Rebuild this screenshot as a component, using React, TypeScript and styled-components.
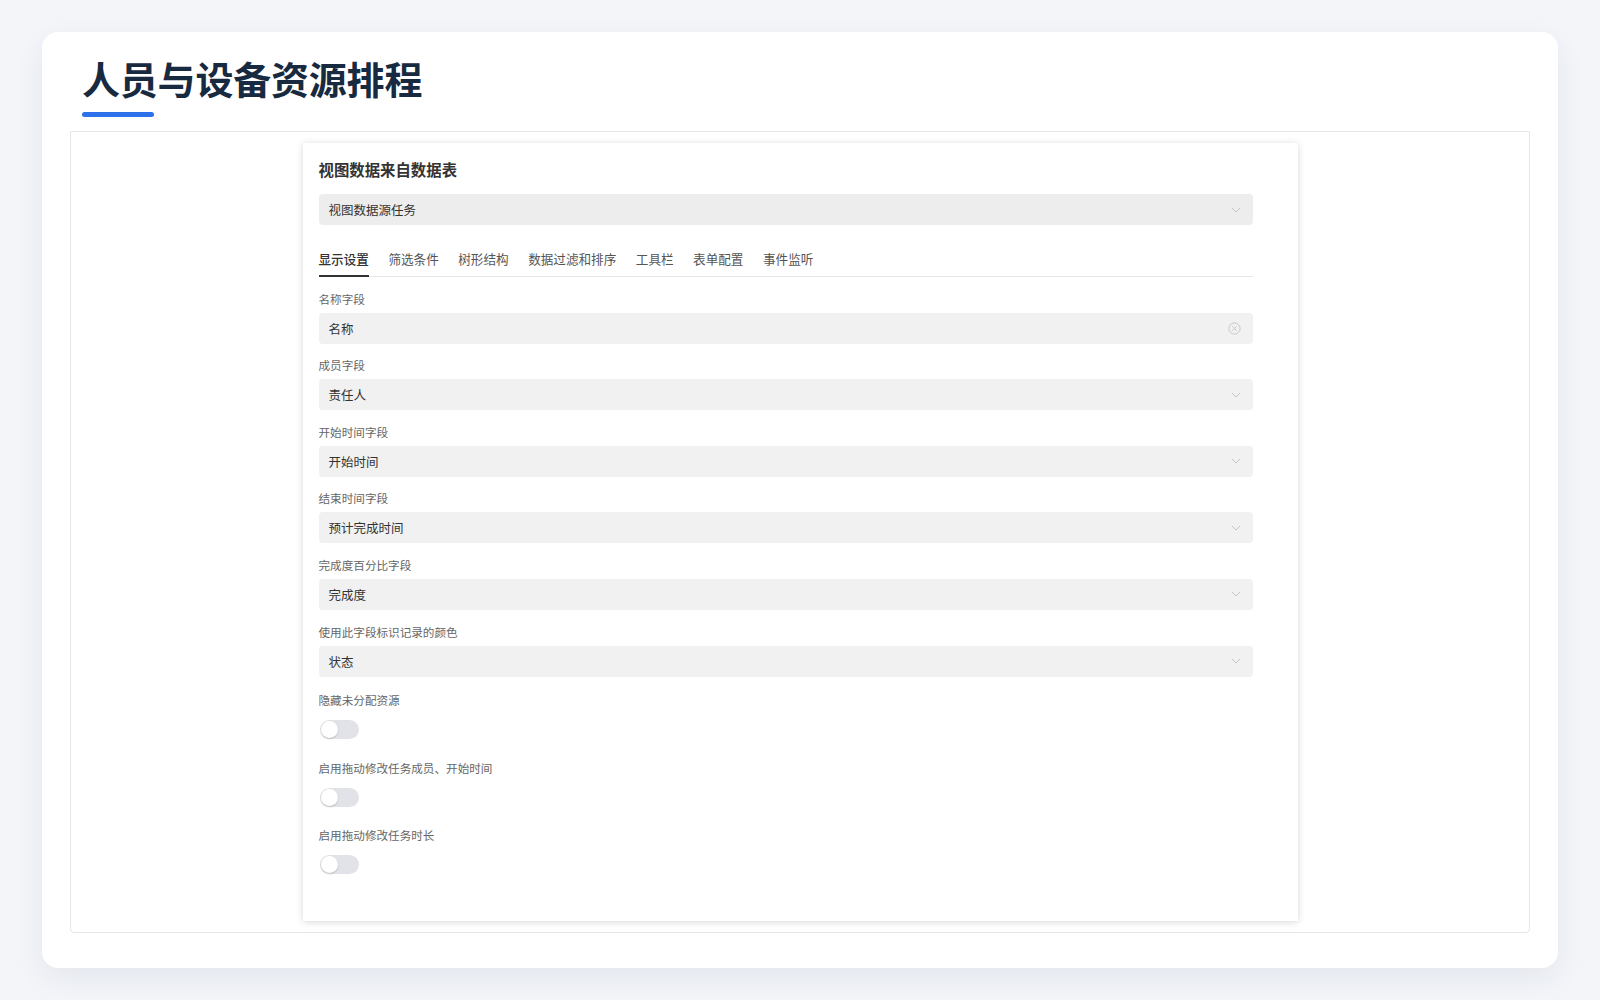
import React from 'react';
import styled, { createGlobalStyle } from 'styled-components';

const GlobalStyle = createGlobalStyle`
  * { box-sizing: border-box; }
  body {
    margin: 0;
    background: #f3f5f9;
    font-family: "Noto Sans CJK SC", "Noto Sans", sans-serif;
  }
`;

const Page = styled.div`
  padding: 32px 42px 31px;
`;

const Card = styled.div`
  background: #fff;
  border-radius: 16px;
  padding: 23px 28px 35px;
  box-shadow: 0 10px 28px rgba(30, 45, 80, 0.07);
`;

const Header = styled.div`
  padding-left: 12px;
  margin-bottom: 14px;
`;

const Title = styled.h1`
  margin: 0;
  font-size: 38px;
  line-height: 46px;
  font-weight: 700;
  color: #182a40;
  letter-spacing: -0.2px;
`;

const TitleBar = styled.div`
  margin-top: 11px;
  width: 72px;
  height: 5px;
  border-radius: 3px;
  background: #2d72ea;
`;

const Frame = styled.div`
  border: 1px solid #e4e6ea;
  border-radius: 0 0 4px 4px;
  padding: 11px;
`;

const Panel = styled.div`
  width: 995px;
  margin: 0 auto;
  background: #fff;
  padding: 16px 45px 41.5px 16px;
  box-shadow: 0 1px 7px rgba(0, 0, 0, 0.16);
`;

const PanelTitle = styled.div`
  font-size: 15.4px;
  line-height: 20px;
  font-weight: 600;
  color: #333;
  margin-bottom: 15px;
`;

const Field = styled.div<{ $tone?: 'dark' | 'light' }>`
  height: 31px;
  border-radius: 4px;
  background: ${p => (p.$tone === 'dark' ? '#ededed' : '#f1f1f1')};
  display: flex;
  align-items: center;
  justify-content: space-between;
  padding: 0 12px 0 10px;
  font-size: 12.5px;
  color: #333;
`;

const Tabs = styled.div`
  margin-top: 16px;
  display: flex;
  gap: 19.5px;
  border-bottom: 1px solid #e6e6e6;
`;

const Tab = styled.div<{ $active?: boolean }>`
  height: 36px;
  line-height: 36px;
  font-size: 12.6px;
  color: ${p => (p.$active ? '#333' : '#555')};
  font-weight: ${p => (p.$active ? 500 : 400)};
  border-bottom: 2px solid ${p => (p.$active ? '#333' : 'transparent')};
  margin-bottom: -1px;
`;

const Group = styled.div<{ $space?: number }>`
  margin-top: ${p => p.$space ?? 13.6}px;
`;

const Label = styled.div`
  font-size: 11.6px;
  line-height: 16px;
  color: #666;
  margin-bottom: 6px;
`;

const SwitchArea = styled.div`
  height: 31px;
  display: flex;
  align-items: center;
  padding-left: 1px;
`;

const SwitchTrack = styled.div`
  position: relative;
  width: 39px;
  height: 19px;
  border-radius: 10px;
  background: #e1e3e8;
`;

const SwitchKnob = styled.div`
  position: absolute;
  left: 1px;
  top: 1px;
  width: 17px;
  height: 17px;
  border-radius: 50%;
  background: #fff;
  box-shadow: 0 1px 2px rgba(0, 0, 0, 0.18);
`;

const Chevron = () => (
  <svg width="10" height="6" viewBox="0 0 10 6" fill="none">
    <path d="M1 1l4 4 4-4" stroke="#c4c4c4" strokeWidth="1" strokeLinecap="round" strokeLinejoin="round" />
  </svg>
);

const ClearIcon = () => (
  <svg width="13" height="13" viewBox="0 0 13 13" fill="none">
    <circle cx="6.5" cy="6.5" r="5.6" stroke="#c8c8c8" strokeWidth="1" />
    <path d="M4.6 4.6l3.8 3.8M8.4 4.6l-3.8 3.8" stroke="#c8c8c8" strokeWidth="1" strokeLinecap="round" />
  </svg>
);

const tabs = ['显示设置', '筛选条件', '树形结构', '数据过滤和排序', '工具栏', '表单配置', '事件监听'];

const selects = [
  { label: '成员字段', value: '责任人' },
  { label: '开始时间字段', value: '开始时间' },
  { label: '结束时间字段', value: '预计完成时间' },
  { label: '完成度百分比字段', value: '完成度' },
  { label: '使用此字段标识记录的颜色', value: '状态' },
];

const switches = ['隐藏未分配资源', '启用拖动修改任务成员、开始时间', '启用拖动修改任务时长'];

export default function App() {
  return (
    <>
      <GlobalStyle />
      <Page>
        <Card>
          <Header>
            <Title>人员与设备资源排程</Title>
            <TitleBar />
          </Header>
          <Frame>
            <Panel>
              <PanelTitle>视图数据来自数据表</PanelTitle>
              <Field $tone="dark">
                <span>视图数据源任务</span>
                <Chevron />
              </Field>
              <Tabs>
                {tabs.map((t, i) => (
                  <Tab key={t} $active={i === 0}>{t}</Tab>
                ))}
              </Tabs>
              <Group>
                <Label>名称字段</Label>
                <Field>
                  <span>名称</span>
                  <ClearIcon />
                </Field>
              </Group>
              {selects.map(s => (
                <Group key={s.label}>
                  <Label>{s.label}</Label>
                  <Field>
                    <span>{s.value}</span>
                    <Chevron />
                  </Field>
                </Group>
              ))}
              {switches.map((s, i) => (
                <Group key={s} $space={i === 0 ? 15.8 : 14.2}>
                  <Label>{s}</Label>
                  <SwitchArea>
                    <SwitchTrack>
                      <SwitchKnob />
                    </SwitchTrack>
                  </SwitchArea>
                </Group>
              ))}
            </Panel>
          </Frame>
        </Card>
      </Page>
    </>
  );
}
